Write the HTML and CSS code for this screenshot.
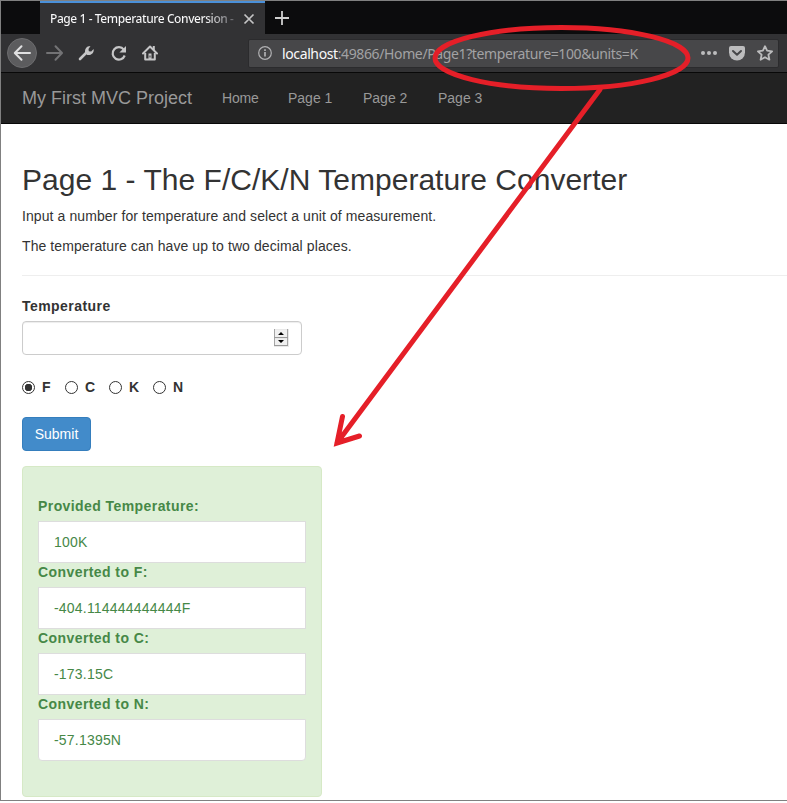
FILE: index.html
```html
<!DOCTYPE html>
<html lang="en">
<head>
<meta charset="utf-8">
<title>Page 1 - Temperature Conversion</title>
<link rel="stylesheet" href="styles.css">
</head>
<body>
<div class="window">
  <div class="tabs">
    <div class="tab"><span class="tab-title">Page 1 - Temperature Conversion -</span>
      <svg class="tab-close" width="12" height="12" viewBox="0 0 12 12"><path d="M1.500 1.500l9 9M10.500 1.500l-9 9" stroke="#c4c4c5" stroke-width="1.700" fill="none"/></svg>
    </div>
    <svg class="tab-new" width="14" height="14" viewBox="0 0 14 14"><path d="M7 0v14M0 7h14" stroke="#cfcfcf" stroke-width="1.800"/></svg>
  </div>
  <div class="toolbar">
    <svg class="buttons" width="180" height="38" viewBox="0 0 180 38" fill="none">
      <circle cx="21" cy="19" r="14.500" fill="#5c5c5e" stroke="#6c6c6e"/>
      <path d="M29 19H14M20.500 12.200L13.800 19l6.700 6.800" stroke="#e0e0e1" stroke-width="2" stroke-linecap="round" stroke-linejoin="round"/>
      <path d="M46 19h14M54.500 12.200L61 19l-6.500 6.800" stroke="#737375" stroke-width="2" stroke-linecap="round" stroke-linejoin="round"/>
      <path d="M79 25l7-7" stroke="#c6c6c7" stroke-width="2.600" stroke-linecap="round"/>
      <path d="M84.300 19.300c-1-3.800 1-7.300 5.200-7.300l-2 3 .3 2.200 2.400.4 2.400-2.700c.8 4-2.700 6.700-6.300 6z" fill="#c6c6c7"/>
      <path d="M122.800 15.600a6.200 6.200 0 1 0 .9 5.900" stroke="#c6c6c7" stroke-width="2.200"/>
      <path d="M125 12v6.500h-6.600z" fill="#c6c6c7"/>
      <path d="M142 19.500l7-7 7 7" stroke="#c6c6c7" stroke-width="2" stroke-linecap="round" stroke-linejoin="round"/>
      <path d="M144.200 19v6.500h9.600V19M152.800 12v4" stroke="#c6c6c7" stroke-width="2" stroke-linejoin="round"/>
      <path d="M147.500 19.500h3V26h-3z" fill="#c6c6c7"/><path d="M149 21.500v2" stroke="#323234"/>
    </svg>
    <div class="address">
      <svg width="14" height="14" viewBox="0 0 14 14" fill="none" stroke="#b1b1b3"><circle cx="7" cy="7" r="6.300" stroke-width="1.200"/><path d="M7 6v4.500M7 3.300v1.700" stroke-width="1.700"/></svg>
      <span class="url"><b>localhost</b>:49866/Home/Page1?temperature=100&amp;units=K</span>
      <svg class="page-actions" width="76" height="20" viewBox="0 0 76 20" fill="none">
        <g fill="#bcbcbd"><circle cx="3" cy="10" r="2"/><circle cx="9" cy="10" r="2"/><circle cx="15" cy="10" r="2"/>
        <path d="M31 3h12q2 0 2 2v4.500a8 8 0 0 1-16 0V5q0-2 2-2z"/></g>
        <path d="M33 8l4 3.800L41 8" stroke="#474749" stroke-width="2" stroke-linecap="round" stroke-linejoin="round"/>
        <path d="M65 3.200l2.100 4.500 5 .6-3.700 3.400 1 5L65 14.200l-4.400 2.500 1-5-3.700-3.400 5-.6z" stroke="#bcbcbd" stroke-width="1.800" stroke-linejoin="round"/>
      </svg>
    </div>
  </div>
  <nav class="navbar"><a class="brand">My First MVC Project</a><a class="home">Home</a><a>Page 1</a><a>Page 2</a><a>Page 3</a></nav>
  <main class="content">
    <h2>Page 1 - The F/C/K/N Temperature Converter</h2>
    <p>Input a number for temperature and select a unit of measurement.</p>
    <p>The temperature can have up to two decimal places.</p>
    <hr>
    <label class="field-label">Temperature</label>
    <div class="field">
      <svg width="15" height="18" viewBox="0 0 15 18"><path d="M0 0h15v18H0z" fill="#e9e9e9"/><path d="M1 1h12v7H1zM1 10h12v6H1z" fill="#f0f0f0"/><path d="M.5 0v17M13.500 0v17" stroke="#a5a5a5"/><path d="M0 8.500h14M0 16.500h14" stroke="#9a9a9a"/><path d="M7 3l3 3H4zM7 14l3-3H4z" fill="#000"/></svg>
    </div>
    <div class="units">
      <label><i class="radio checked"></i>F</label><label><i class="radio"></i>C</label><label><i class="radio"></i>K</label><label><i class="radio"></i>N</label>
    </div>
    <button class="submit">Submit</button>
    <section class="result">
      <dl>
        <dt>Provided Temperature:</dt><dd>100K</dd>
        <dt>Converted to F:</dt><dd>-404.114444444444F</dd>
        <dt>Converted to C:</dt><dd>-173.15C</dd>
        <dt>Converted to N:</dt><dd>-57.1395N</dd>
      </dl>
    </section>
  </main>
</div>
<svg class="annotation" width="787" height="803" viewBox="0 0 787 803" fill="none" stroke="#e51f28" stroke-width="5" stroke-linecap="round">
  <ellipse cx="561.500" cy="58" rx="126.500" ry="30.500"/>
  <path d="M600 89.500L337 443M342.500 416.500L337 443l22.500-7"/>
</svg>
</body>
</html>
```
FILE: styles.css
```css
* { box-sizing: border-box; }
body { margin: 0; background: #fff; color: #333; font: 14px/20px "Liberation Sans", Arial, sans-serif; }
.window { height: 801px; border: solid #808080; border-width: 1px 0 1px 1px; overflow: hidden; }
.tabs { display: flex; align-items: center; height: 33px; padding-left: 39px; background: #0c0c0d; }
.tab { display: flex; align-items: center; width: 225px; height: 33px; padding: 0 10px; border-top: 2px solid #4a90d9; background: #323234; color: #f9f9fa; font: 500 12px/16px "Noto Sans", sans-serif; }
.tab-title { width: 187px; white-space: nowrap; overflow: hidden; letter-spacing: -.42px; background: linear-gradient(90deg, #f9f9fa 155px, #55555a 187px); background-clip: text; color: transparent; }
.tab-close { margin-left: 6px; flex: none; }
.tab-new { margin-left: 10px; }
.toolbar { display: flex; align-items: center; height: 38px; background: #323234; }
.buttons { flex: none; }
.address { display: flex; align-items: center; width: 531px; height: 29px; margin-left: 67px; padding: 0 2px 0 9px; border: 1px solid #2b2b2d; border-radius: 2px; background: #474749; }
.address > svg { flex: none; }
.url { margin: 2px 0 0 10px; color: #a2a2a4; font: 14px/20px "Noto Sans", sans-serif; letter-spacing: -.38px; white-space: nowrap; }
.url b { color: #f9f9fa; font-weight: 400; }
.address .page-actions { margin-left: auto; }
.navbar { display: flex; align-items: center; gap: 30px; height: 52px; padding-left: 21px; border: solid #080808; border-width: 1px 0; background: #222; color: #999; }
.navbar a { width: 45px; white-space: nowrap; }
.navbar .home { width: 36px; letter-spacing: -.2px; }
.navbar .brand { width: 170px; font-size: 18px; }
.content { padding: 39px 0 0 21px; }
h2 { margin: 0 0 10px; font-size: 30px; line-height: 33px; font-weight: 400; letter-spacing: .025px; white-space: nowrap; }
p { margin: 0 0 10px; letter-spacing: .09px; }
hr { margin: 19px 0 20px; border: 0; border-top: 1px solid #eee; }
.field-label { display: block; margin-bottom: 5px; font-weight: 700; letter-spacing: .45px; }
.field { display: flex; align-items: center; justify-content: flex-end; width: 280px; height: 34px; padding-right: 12px; border: 1px solid #ccc; border-radius: 4px; box-shadow: inset 0 1px 1px rgba(0,0,0,.075); }
.units { display: flex; margin-top: 22px; font-weight: 700; }
.units label { display: flex; align-items: center; width: 44px; }
.units label:first-child { width: 43px; }
.radio { width: 13px; height: 13px; margin-right: 7px; border: 1px solid #333; border-radius: 50%; background: #fff; }
.checked { background: radial-gradient(circle, #333 3.5px, #fff 4px); }
.submit { display: block; width: 69px; height: 34px; margin: 20px 0 15px; padding: 0; border: 1px solid #357ebd; border-radius: 4px; background: #428bca; color: #fff; font: inherit; }
.result { width: 300px; height: 331px; padding: 29px 15px 35px; border: 1px solid #d6e9c6; border-radius: 4px; background: #dff0d8; color: #468847; }
dl, dd { margin: 0; }
dt { margin-bottom: 5px; font-weight: 700; letter-spacing: .42px; }
dd { height: 42px; margin-bottom: -1px; padding: 10px 15px; border: 1px solid #ddd; background: #fff; letter-spacing: .2px; }
dd:last-child { border-radius: 0 0 4px 4px; }
.annotation { position: absolute; left: 0; top: 0; pointer-events: none; }
```
